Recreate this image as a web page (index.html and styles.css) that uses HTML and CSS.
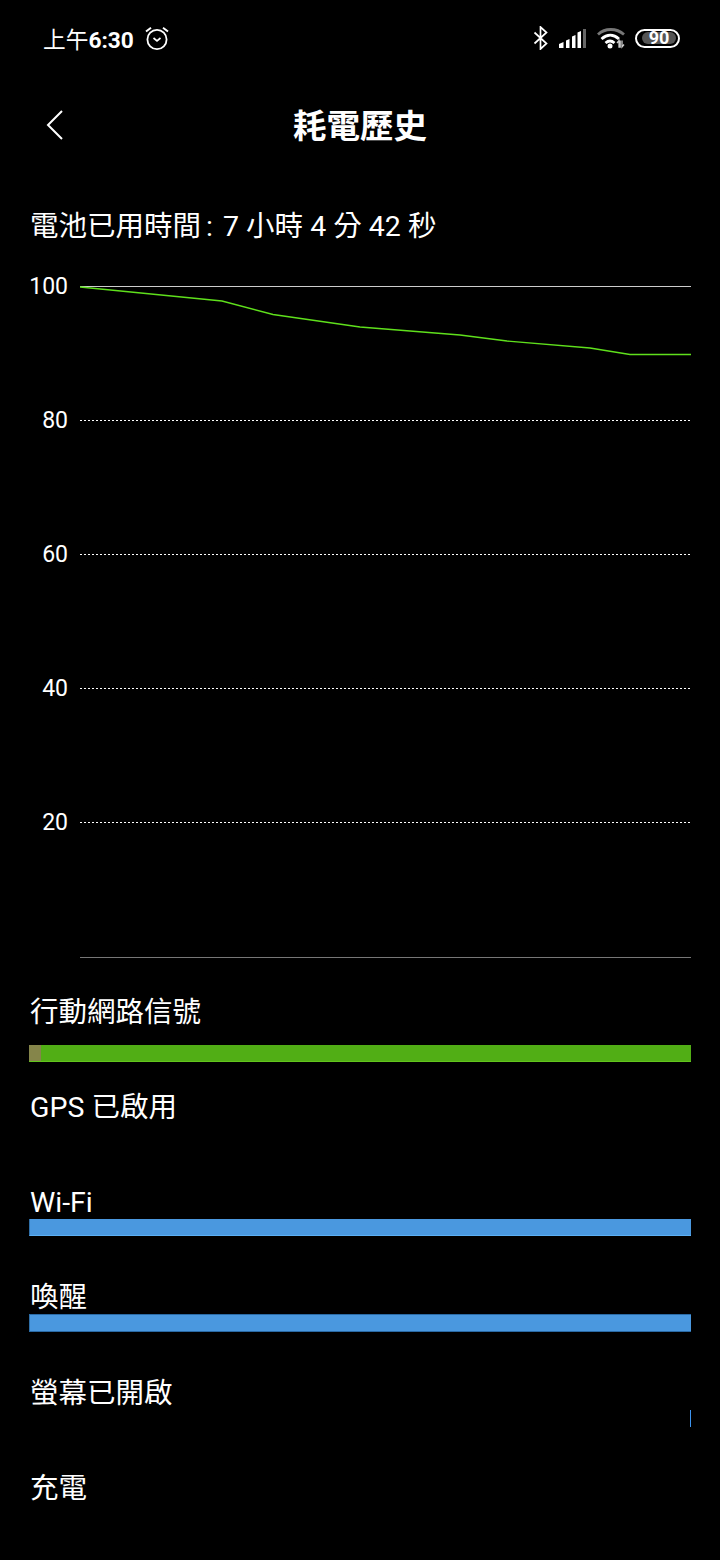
FILE: index.html
```html
<!DOCTYPE html>
<html lang="zh-Hant">
  <head>
    <meta charset="UTF-8" />
    <title>耗電歷史</title>
    <link rel="stylesheet" href="styles.css">
  </head>
  <body>
    <div class="status-bar">
      <div class="status-left">
        <span class="clock">上午<b>6:30</b></span>
        <svg class="alarm" width="26" height="26" viewBox="0 0 26 26" fill="none" stroke="#fff">
          <circle cx="13" cy="14.5" r="9.6" stroke-width="1.8" />
          <path d="M9.5 13l3.5 2.8 3.5-2.8" stroke-width="1.7" />
          <path d="M2 6.5l5-3.8M24 6.5l-5-3.8" stroke-width="2" />
        </svg>
      </div>
      <div class="status-right">
        <svg class="bt" width="16" height="24" viewBox="0 0 16 24" fill="none" stroke="#fff" stroke-width="1.7">
          <path d="M1.5 6.5l12 11-6 5.5V1l6 5.5-12 11" />
        </svg>
        <svg class="signal" width="27" height="19" viewBox="0 0 27 19">
          <path fill="#fff" d="M0 15l4.500-2v6H0zM7 11.500l3.500-1.500v9H7zM13 7.500l3.500-1.500v13H13zM18.500 3.500l3.500-1.500v17h-3.500z" />
          <path fill="#666" d="M24 0h3v19h-3z" />
        </svg>
        <svg class="wifi" width="28" height="22" viewBox="0 0 28 22" fill="none">
          <path d="M1 7.500C8 .8 19.500 .8 27 7.500" stroke="#777" stroke-width="2.800" />
          <path d="M4.500 12c5.500-5 12-5 17.500 0M8.500 16c3-2.600 6-2.600 9 0" stroke="#fff" stroke-width="2.800" />
          <circle cx="13" cy="19" r="2.500" fill="#fff" />
          <path d="M20 16l2-2.500V20h1.200v-6.500M25 13.500V20l2-2.500" stroke="#ccc" stroke-width="1.300" />
        </svg>
        <div class="battery"><span class="battery-fill">90</span></div>
      </div>
    </div>

    <header class="title-bar">
      <svg class="back" width="20" height="30" viewBox="0 0 20 30" fill="none" stroke="#fff" stroke-width="2">
        <path d="M17 1L3 15l14 14" />
      </svg>
      <h1>耗電歷史</h1>
    </header>

    <p class="usage">電池已用時間<span class="colon">:</span> 7 小時 4 分 42 秒</p>

    <section class="chart">
      <div class="chart-row"><span class="chart-label">100</span><div class="chart-line solid"></div></div>
      <div class="chart-row"><span class="chart-label">80</span><div class="chart-line"></div></div>
      <div class="chart-row"><span class="chart-label">60</span><div class="chart-line"></div></div>
      <div class="chart-row"><span class="chart-label">40</span><div class="chart-line"></div></div>
      <div class="chart-row"><span class="chart-label">20</span><div class="chart-line"></div></div>
      <div class="chart-row last"><span class="chart-label"></span><div class="chart-line base"></div></div>
      <svg class="chart-plot" width="611" height="80" viewBox="0 0 611 80" fill="none">
        <polyline stroke="#5fe01c" stroke-width="1.300" points="0,1 142,15 193,28.500 280,41 380,49 427,55 510,62 550,68.500 611,68.500" />
      </svg>
    </section>

    <section class="tracks">
      <div class="track">
        <div class="track-label">行動網路信號</div>
        <div class="track-bar signal-bar"><div class="weak"></div></div>
      </div>
      <div class="track">
        <div class="track-label">GPS 已啟用</div>
        <div class="track-bar"></div>
      </div>
      <div class="track">
        <div class="track-label">Wi-Fi</div>
        <div class="track-bar blue wifi-bar"></div>
      </div>
      <div class="track">
        <div class="track-label">喚醒</div>
        <div class="track-bar blue wake-bar"></div>
      </div>
      <div class="track">
        <div class="track-label">螢幕已開啟</div>
        <div class="track-bar"><div class="tick"></div></div>
      </div>
      <div class="track">
        <div class="track-label">充電</div>
        <div class="track-bar"></div>
      </div>
    </section>
  </body>
</html>
```

FILE: styles.css
```css
body {
  margin: 0;
  width: 720px;
  height: 1560px;
  overflow: hidden;
  background: #000;
  color: #fff;
  font-family: Roboto, "Noto Sans CJK TC", sans-serif;
}

/* status bar */
.status-bar {
  box-sizing: border-box;
  display: flex;
  justify-content: space-between;
  align-items: center;
  height: 78px;
  padding: 0 40px 2px 43px;
}
.status-left, .status-right { display: flex; align-items: center; }
.clock { font-size: 22.700px; }
.clock b { font-weight: 700; }
.alarm { margin-left: 10px; }
.status-right { gap: 10px; }
.wifi { margin-left: 1px; }
.battery {
  box-sizing: border-box;
  width: 45px;
  height: 19px;
  padding: 1.500px 2px 1.500px 5px;
  border: 2px solid #fff;
  border-radius: 10px;
}
.battery-fill {
  display: block;
  height: 12px;
  border-radius: 6px;
  background: #555;
  color: #fff;
  font-size: 18px;
  font-weight: 700;
  line-height: 12px;
  text-align: center;
}

/* title */
.title-bar {
  box-sizing: border-box;
  position: relative;
  display: flex;
  align-items: center;
  justify-content: center;
  height: 94px;
  padding-bottom: 4px;
}
.title-bar h1 { margin: 0; font-size: 33.500px; font-weight: 700; }
.back { position: absolute; left: 45px; top: 32px; }

.usage {
  margin: 35px 0 0 30px;
  font-size: 28.500px;
  line-height: 40px;
}
.colon { margin: 0 3px 0 5px; }

/* chart */
.chart { position: relative; margin-top: 39px; }
.chart-row {
  display: flex;
  height: 134px;
}
.chart-row.last { height: 35.500px; margin-top: 1px; }
.chart-label {
  width: 68px;
  height: 24px;
  margin-top: -11px;
  font-size: 23px;
  line-height: 24px;
  text-align: right;
}
.chart-line {
  flex: none;
  width: 611px;
  height: 1px;
  margin-left: 12px;
  background: repeating-linear-gradient(90deg, #fff 0 2px, transparent 2px 4px);
}
.chart-line.solid { background: #ccc; }
.chart-line.base { background: #777; }
.chart-plot { position: absolute; left: 80px; top: 0; }

/* tracks */
.tracks { margin: 0 29px; width: 662px; }
.track {
  height: 95.300px;
}
.track-label {
  height: 36px;
  padding-left: 1px;
  font-size: 28.500px;
  line-height: 40px;
}
.track-bar {
  box-sizing: border-box;
  position: relative;
  display: flex;
  height: 17px;
}
.signal-bar { margin-top: 16px; background: #51ae15; border-bottom: 1px solid #62c41c; }
.weak { width: 12px; background: #85854a; }
.blue { background: #4a98df; border-left: 1px solid #2f6fa8; }
.wifi-bar { border-bottom: 1px solid #5cb0f5; }
.wake-bar { border-top: 1px solid #2a6aa5; border-bottom: 1px solid #2a6aa5; height: 18px; }
.tick {
  position: absolute;
  right: 0;
  width: 1px;
  height: 17px;
  background: #3d94ef;
}
```
